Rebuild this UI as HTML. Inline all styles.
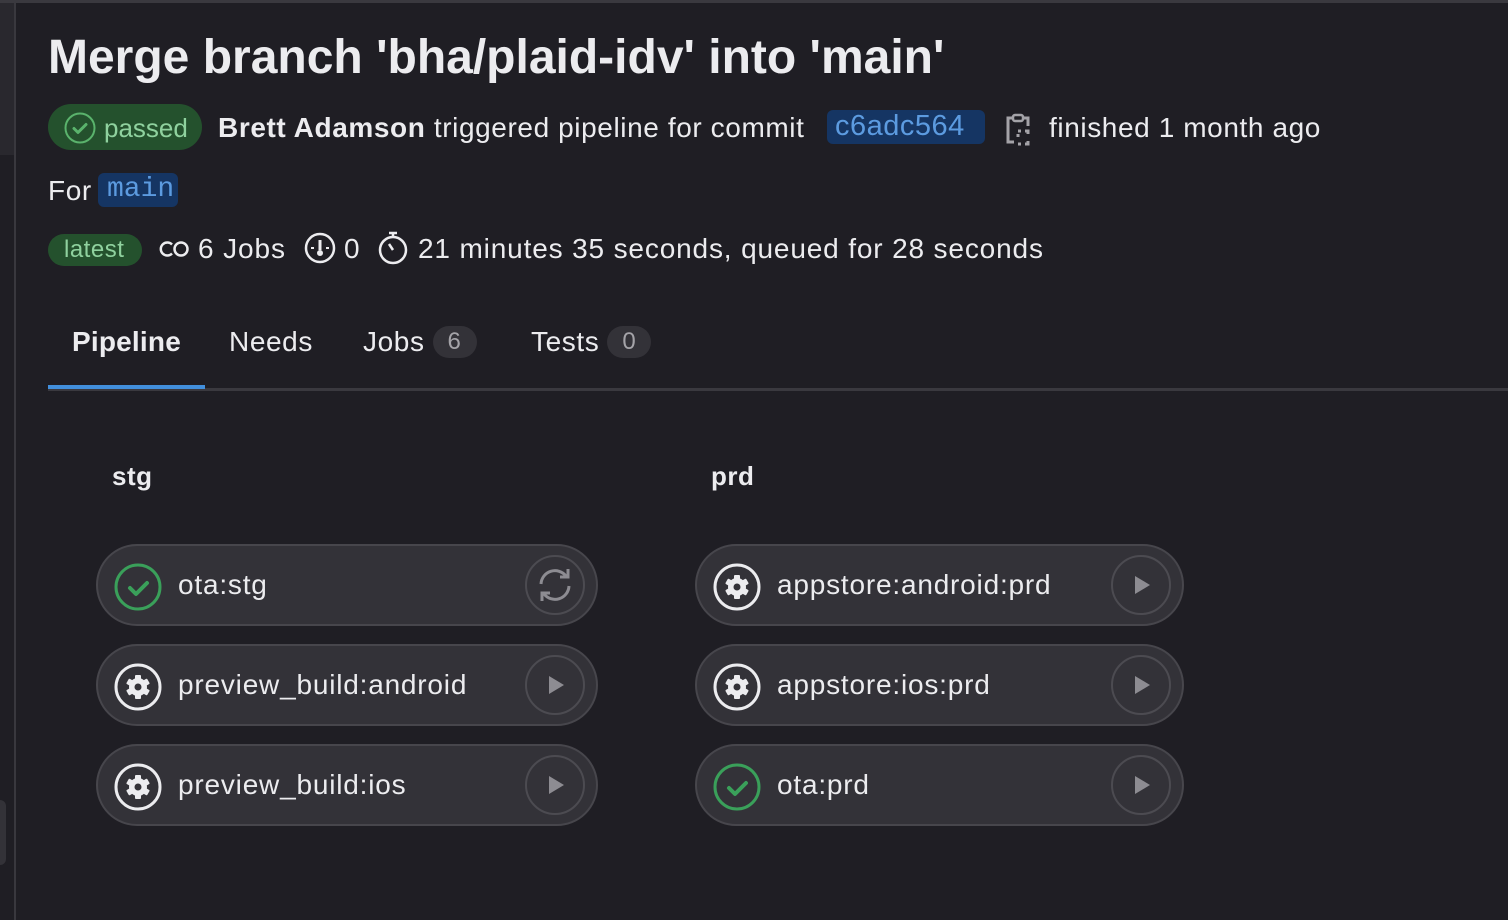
<!DOCTYPE html>
<html><head><meta charset="utf-8"><style>
*{margin:0;padding:0;box-sizing:border-box}
body{width:1508px;height:920px;background:#1f1e24;color:#ececef;font-family:"Liberation Sans",sans-serif;position:relative;overflow:hidden}
.a{position:absolute;white-space:nowrap}
.card{position:absolute;height:82px;border:2px solid #47464c;border-radius:41px;background:#333238}
.card .nm{position:absolute;left:80px;top:23px;font-size:28px;color:#ececef;letter-spacing:0.8px}
.card .st{position:absolute;left:16px;top:17px}
.card .btn{position:absolute;top:9px;width:60px;height:60px;border:2px solid #4c4b51;border-radius:50%}
.pill{display:inline-block;border-radius:16px;background:#333238;color:#a4a3a8;padding:0 15px;font-size:24px;line-height:32px;margin-left:8px;vertical-align:2px}
.t{font-size:28px;letter-spacing:0.6px}
</style></head><body>
<div class="a" style="left:0;top:0;width:1508px;height:3px;background:#3a393f"></div>
<div class="a" style="left:0;top:3px;width:14px;height:152px;background:#29282e"></div>
<div class="a" style="left:14px;top:3px;width:2px;height:917px;background:#39383e"></div>
<div class="a" style="left:0;top:800px;width:6px;height:65px;background:#333238;border-radius:0 6px 6px 0"></div>

<div class="a" style="left:48px;top:30px;font-size:48px;font-weight:bold;letter-spacing:0px">Merge branch 'bha/plaid-idv' into 'main'</div>

<div class="a" style="left:48px;top:104px;height:46px;width:154px;border-radius:23px;background:#24512d"></div>
<svg class="a" style="left:63px;top:111px" width="34" height="34" viewBox="0 0 34 34"><circle cx="17" cy="17" r="14.5" fill="none" stroke="#5ab36c" stroke-width="2"/><path d="M11 17.5l4 4 8-8" fill="none" stroke="#5ab36c" stroke-width="3" stroke-linecap="round" stroke-linejoin="round"/></svg>
<div class="a" style="left:104px;top:113px;font-size:26px;color:#8fd19e">passed</div>
<div class="a t" style="left:218px;top:112px"><b>Brett Adamson</b> triggered pipeline for commit</div>
<div class="a" style="left:827px;top:110px;width:158px;height:34px;background:#153563;border-radius:6px"></div>
<div class="a" style="left:835px;top:110px;font-family:'Liberation Sans',sans-serif;font-size:29px;color:#5c9be0;letter-spacing:0.5px">c6adc564</div>
<svg class="a" style="left:1004px;top:112px" width="28" height="34" viewBox="0 0 28 34"><path d="M9 6H4v24h6M19 6h5v8" fill="none" stroke="#a4a3a8" stroke-width="3"/><rect x="9" y="3" width="10" height="6" rx="2" fill="none" stroke="#a4a3a8" stroke-width="2.5"/><path d="M14 19h3M21 19h3v3M14 32h3M21 32h3v-3M14 22v3" stroke="#a4a3a8" stroke-width="3" fill="none"/></svg>
<div class="a t" style="left:1049px;top:112px">finished 1 month ago</div>

<div class="a t" style="left:48px;top:175px">For</div>
<div class="a" style="left:98px;top:173px;width:80px;height:34px;background:#153563;border-radius:6px"></div>
<div class="a" style="left:107px;top:174px;font-family:'Liberation Mono',monospace;font-size:28px;color:#5c9be0">main</div>

<div class="a" style="left:48px;top:234px;width:94px;height:32px;background:#24512d;border-radius:16px"></div>
<div class="a" style="left:64px;top:236px;font-size:24px;color:#8fd19e;letter-spacing:0.5px">latest</div>
<svg class="a" style="left:158px;top:237px" width="34" height="24" viewBox="0 0 34 24"><path d="M14 7.5A6.5 6.5 0 1 0 14 16.5" fill="none" stroke="#ececef" stroke-width="2.5"/><circle cx="23" cy="12" r="6.5" fill="none" stroke="#ececef" stroke-width="2.5"/></svg>
<div class="a t" style="left:198px;top:233px;letter-spacing:0.9px">6 Jobs</div>
<svg class="a" style="left:303px;top:231px" width="34" height="34" viewBox="0 0 34 34"><circle cx="17" cy="17" r="14" fill="none" stroke="#ececef" stroke-width="2.5"/><path d="M17 9v10" stroke="#ececef" stroke-width="3"/><circle cx="17" cy="22" r="3" fill="#ececef"/><path d="M8 17h3M23 17h3" stroke="#ececef" stroke-width="2"/></svg>
<div class="a t" style="left:344px;top:233px">0</div>
<svg class="a" style="left:377px;top:230px" width="32" height="36" viewBox="0 0 32 36"><circle cx="16" cy="20" r="13" fill="none" stroke="#ececef" stroke-width="2.5"/><path d="M12 3h8M16 3v4M16 20l-4-6" stroke="#ececef" stroke-width="2.5" fill="none"/></svg>
<div class="a t" style="left:418px;top:233px;letter-spacing:0.85px">21 minutes 35 seconds, queued for 28 seconds</div>

<div class="a" style="left:72px;top:326px;font-size:28px;font-weight:bold;letter-spacing:0.2px">Pipeline</div>
<div class="a t" style="left:229px;top:326px">Needs</div>
<div class="a t" style="left:363px;top:326px">Jobs<span class="pill">6</span></div>
<div class="a t" style="left:531px;top:326px">Tests<span class="pill">0</span></div>
<div class="a" style="left:48px;top:388px;width:1460px;height:3px;background:#3a393f"></div>
<div class="a" style="left:48px;top:385px;width:157px;height:4px;background:#428fdc"></div>

<div class="a" style="left:112px;top:461px;font-size:26px;font-weight:bold;letter-spacing:0.5px">stg</div>
<div class="a" style="left:711px;top:461px;font-size:26px;font-weight:bold;letter-spacing:0.5px">prd</div>

<div class="card" style="left:96px;top:544px;width:502px"><svg class="st" width="48" height="48" viewBox="0 0 48 48"><circle cx="24" cy="24" r="22" fill="none" stroke="#3aa05a" stroke-width="3"/><path d="M16 25l6 6 11-11" fill="none" stroke="#3aa05a" stroke-width="4" stroke-linecap="round" stroke-linejoin="round"/></svg><div class="nm">ota:stg</div><div class="btn" style="left:427px"><svg width="56" height="56" viewBox="0 0 56 56"><path d="M14 27a14 14 0 0 1 25-8M42 29a14 14 0 0 1-25 8" fill="none" stroke="#8d8c92" stroke-width="3"/><path d="M41 12v8h-8M15 44v-8h8" fill="none" stroke="#8d8c92" stroke-width="3"/></svg></div></div>

<div class="card" style="left:96px;top:644px;width:502px"><svg class="st" width="48" height="48" viewBox="0 0 48 48"><circle cx="24" cy="24" r="22" fill="none" stroke="#ececef" stroke-width="3"/><g fill="#ececef"><circle cx="24" cy="24" r="9"/><rect x="21" y="12" width="6" height="24" rx="1"/><rect x="21" y="12" width="6" height="24" rx="1" transform="rotate(60 24 24)"/><rect x="21" y="12" width="6" height="24" rx="1" transform="rotate(120 24 24)"/></g><circle cx="24" cy="24" r="3.5" fill="#333238"/></svg><div class="nm">preview_build:android</div><div class="btn" style="left:427px"><svg width="56" height="56" viewBox="0 0 56 56"><path d="M22 19v18l15-9z" fill="#8d8c92"/></svg></div></div>

<div class="card" style="left:96px;top:744px;width:502px"><svg class="st" width="48" height="48" viewBox="0 0 48 48"><circle cx="24" cy="24" r="22" fill="none" stroke="#ececef" stroke-width="3"/><g fill="#ececef"><circle cx="24" cy="24" r="9"/><rect x="21" y="12" width="6" height="24" rx="1"/><rect x="21" y="12" width="6" height="24" rx="1" transform="rotate(60 24 24)"/><rect x="21" y="12" width="6" height="24" rx="1" transform="rotate(120 24 24)"/></g><circle cx="24" cy="24" r="3.5" fill="#333238"/></svg><div class="nm">preview_build:ios</div><div class="btn" style="left:427px"><svg width="56" height="56" viewBox="0 0 56 56"><path d="M22 19v18l15-9z" fill="#8d8c92"/></svg></div></div>

<div class="card" style="left:695px;top:544px;width:489px"><svg class="st" width="48" height="48" viewBox="0 0 48 48"><circle cx="24" cy="24" r="22" fill="none" stroke="#ececef" stroke-width="3"/><g fill="#ececef"><circle cx="24" cy="24" r="9"/><rect x="21" y="12" width="6" height="24" rx="1"/><rect x="21" y="12" width="6" height="24" rx="1" transform="rotate(60 24 24)"/><rect x="21" y="12" width="6" height="24" rx="1" transform="rotate(120 24 24)"/></g><circle cx="24" cy="24" r="3.5" fill="#333238"/></svg><div class="nm">appstore:android:prd</div><div class="btn" style="left:414px"><svg width="56" height="56" viewBox="0 0 56 56"><path d="M22 19v18l15-9z" fill="#8d8c92"/></svg></div></div>

<div class="card" style="left:695px;top:644px;width:489px"><svg class="st" width="48" height="48" viewBox="0 0 48 48"><circle cx="24" cy="24" r="22" fill="none" stroke="#ececef" stroke-width="3"/><g fill="#ececef"><circle cx="24" cy="24" r="9"/><rect x="21" y="12" width="6" height="24" rx="1"/><rect x="21" y="12" width="6" height="24" rx="1" transform="rotate(60 24 24)"/><rect x="21" y="12" width="6" height="24" rx="1" transform="rotate(120 24 24)"/></g><circle cx="24" cy="24" r="3.5" fill="#333238"/></svg><div class="nm">appstore:ios:prd</div><div class="btn" style="left:414px"><svg width="56" height="56" viewBox="0 0 56 56"><path d="M22 19v18l15-9z" fill="#8d8c92"/></svg></div></div>

<div class="card" style="left:695px;top:744px;width:489px"><svg class="st" width="48" height="48" viewBox="0 0 48 48"><circle cx="24" cy="24" r="22" fill="none" stroke="#3aa05a" stroke-width="3"/><path d="M16 25l6 6 11-11" fill="none" stroke="#3aa05a" stroke-width="4" stroke-linecap="round" stroke-linejoin="round"/></svg><div class="nm">ota:prd</div><div class="btn" style="left:414px"><svg width="56" height="56" viewBox="0 0 56 56"><path d="M22 19v18l15-9z" fill="#8d8c92"/></svg></div></div>
</body></html>
